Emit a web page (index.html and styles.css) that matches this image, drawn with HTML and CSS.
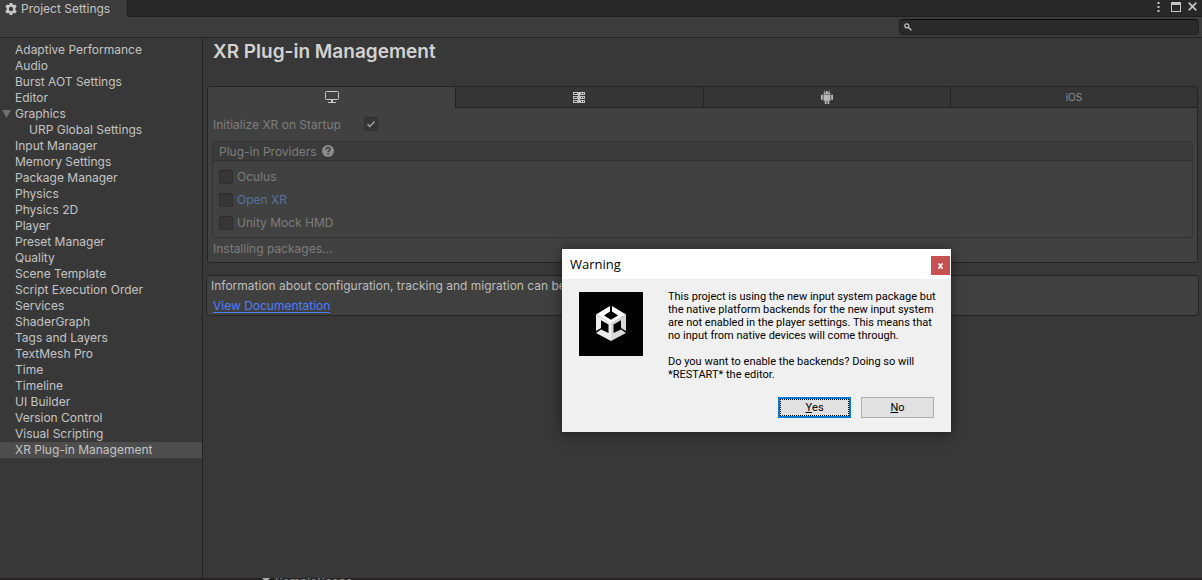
FILE: index.html
```html
<!DOCTYPE html>
<html lang="en">
<head>
<meta charset="utf-8">
<title>Project Settings</title>
<link rel="stylesheet" href="styles.css">
</head>
<body>
<div class="window">
  <header class="titlebar">
    <div class="window-tab">
      <svg class="gear" width="12" height="12" viewBox="0 0 12 12" aria-hidden="true">
        <path fill="#c8c8c8" fill-rule="evenodd" d="M4.600 0h2.800l.3 1.700.7.400 1.800-.6L11.700 3.800 10.400 5v2l1.300 1.200-1.500 2.300-1.800-.6-.7.400L7.400 12H4.600l-.3-1.700-.7-.4-1.800.6L.3 8.200 1.600 7V5L.3 3.800l1.500-2.300 1.800.6.700-.4zM6 3.800a2.200 2.200 0 1 0 0 4.400 2.200 2.200 0 0 0 0-4.400z"/>
      </svg>
      <span>Project Settings</span>
    </div>
    <div class="window-controls">
      <button class="win-btn" aria-label="Menu"><svg width="3" height="11" viewBox="0 0 3 11"><path fill="#c4c4c4" d="M.5 1h2v2h-2zM.5 5h2v2h-2zM.5 9h2v2h-2z"/></svg></button>
      <button class="win-btn" aria-label="Maximize"><svg width="10" height="10" viewBox="0 0 10 10"><path fill="#c4c4c4" fill-rule="evenodd" d="M0 0h10v10H0zM1 3v6h8V3z"/></svg></button>
      <button class="win-btn" aria-label="Close"><svg width="9" height="9" viewBox="0 0 9 9"><path d="M.7.7l7.600 7.600M8.300.7L.7 8.300" stroke="#c4c4c4" stroke-width="1.700"/></svg></button>
    </div>
  </header>

  <div class="toolbar">
    <div class="search">
      <svg width="8" height="8" viewBox="0 0 8 8" aria-hidden="true"><circle cx="2.800" cy="2.800" r="2" fill="none" stroke="#c4c4c4" stroke-width="1.200"/><path d="M4.300 4.300l3 3" stroke="#c4c4c4" stroke-width="1.400"/></svg>
      <input class="search-input" type="text" aria-label="Search settings">
    </div>
  </div>

  <div class="content">
    <nav class="sidebar" aria-label="Settings categories">
      <a href="#" class="item">Adaptive Performance</a>
      <a href="#" class="item">Audio</a>
      <a href="#" class="item">Burst AOT Settings</a>
      <a href="#" class="item">Editor</a>
      <a href="#" class="item parent"><svg class="arrow" width="9" height="8" viewBox="0 0 9 8" aria-hidden="true"><path d="M0 0h9L4.500 8z" fill="#6e6e6e"/></svg>Graphics</a>
      <a href="#" class="item child">URP Global Settings</a>
      <a href="#" class="item">Input Manager</a>
      <a href="#" class="item">Memory Settings</a>
      <a href="#" class="item">Package Manager</a>
      <a href="#" class="item">Physics</a>
      <a href="#" class="item">Physics 2D</a>
      <a href="#" class="item">Player</a>
      <a href="#" class="item">Preset Manager</a>
      <a href="#" class="item">Quality</a>
      <a href="#" class="item">Scene Template</a>
      <a href="#" class="item">Script Execution Order</a>
      <a href="#" class="item">Services</a>
      <a href="#" class="item">ShaderGraph</a>
      <a href="#" class="item">Tags and Layers</a>
      <a href="#" class="item">TextMesh Pro</a>
      <a href="#" class="item">Time</a>
      <a href="#" class="item">Timeline</a>
      <a href="#" class="item">UI Builder</a>
      <a href="#" class="item">Version Control</a>
      <a href="#" class="item">Visual Scripting</a>
      <a href="#" class="item selected" aria-current="page">XR Plug-in Management</a>
    </nav>

    <main class="main">
      <h1 class="heading">XR Plug-in Management</h1>

      <section class="panel">
        <div class="tabs" role="tablist">
          <button class="tab active" role="tab" aria-selected="true" aria-label="Desktop">
            <svg width="14" height="12" viewBox="0 0 14 12"><rect x=".5" y=".5" width="13" height="8" rx="1" fill="none" stroke="#c8c8c8"/><path d="M6 9h2v2h3v1H3v-1h3z" fill="#c8c8c8"/></svg>
          </button>
          <button class="tab" role="tab" aria-selected="false" aria-label="Dedicated server">
            <svg width="12" height="11" viewBox="0 0 12 11"><path fill="#c4c4c4" d="M0 0h12v3H0zM0 4h12v3H0zM0 8h12v3H0zM5 3h2v5H5z"/><path fill="#353535" d="M1 1h3v1H1zM8 1h1v1H8zM10 1h1v1h-1zM1 5h3v1H1zM8 5h1v1H8zM10 5h1v1h-1zM1 9h3v1H1zM8 9h1v1H8zM10 9h1v1h-1z"/></svg>
          </button>
          <button class="tab" role="tab" aria-selected="false" aria-label="Android">
            <svg width="12" height="14" viewBox="0 0 12 14"><path d="M3.200.3l1 1.500M8.800.3l-1 1.500" stroke="#aaa" stroke-width=".7"/><path fill="#b9b9b9" d="M2.500 4C2.600 2.200 4 1.200 6 1.200S9.400 2.200 9.500 4zM2.500 4.600h7v6.200h-7zM0 5.400q0-.9.900-.9t.9.900v3.500q0 .9-.9.900T0 8.900zM10.200 5.400q0-.9.900-.9t.9.900v3.500q0 .9-.9.900t-.9-.9zM3.800 10h1.700v4H3.800zM6.500 10h1.700v4H6.500z"/><path fill="#353535" d="M4 2.300h1v.9H4zM7 2.300h1v.9H7z"/></svg>
          </button>
          <button class="tab" role="tab" aria-selected="false">iOS</button>
        </div>

        <div class="panel-body">
          <div class="startup">
            <label class="startup-label" for="startup">Initialize XR on Startup</label>
            <input class="check" type="checkbox" id="startup" checked disabled>
          </div>

          <div class="providers">
            <div class="providers-head">
              <span>Plug-in Providers</span>
              <svg width="12" height="12" viewBox="0 0 12 12" aria-hidden="true"><circle cx="6" cy="6" r="6" fill="#8c8c8c"/><path d="M4 4.700C4 3.300 4.800 2.700 6 2.700s2 .7 2 1.700C8 5.600 6.100 5.600 6.100 7.200" fill="none" stroke="#3b3b3b" stroke-width="1.400"/><path fill="#3b3b3b" d="M5.300 8.200h1.500v1.500H5.300z"/></svg>
            </div>
            <div class="providers-list">
              <label class="provider"><input class="check" type="checkbox" disabled><span>Oculus</span></label>
              <label class="provider linked"><input class="check" type="checkbox" disabled><span>Open XR</span></label>
              <label class="provider"><input class="check" type="checkbox" disabled><span>Unity Mock HMD</span></label>
            </div>
          </div>

          <p class="status">Installing packages...</p>
        </div>
      </section>

      <section class="info">
        <p class="info-text">Information about configuration, tracking and migration can be found below.</p>
        <a class="doc-link" href="#">View Documentation</a>
      </section>
    </main>
  </div>

  <footer class="behind">
    <svg width="8" height="8" viewBox="0 0 8 8" aria-hidden="true"><path d="M0 0h8L4 4z" fill="#b0b0b0"/></svg>
    <span class="behind-name">SampleScene</span>
  </footer>
</div>

<div class="dialog" role="dialog" aria-labelledby="dialog-title">
  <div class="dialog-head">
    <h2 class="dialog-title" id="dialog-title">Warning</h2>
    <button class="dialog-close" aria-label="Close"><svg width="5" height="6" viewBox="0 0 5 6"><path d="M.5.3l4 5.400M4.500.3l-4 5.400" stroke="#fff" stroke-width="1.600"/></svg></button>
  </div>
  <div class="dialog-body">
    <svg class="logo" width="64" height="64" viewBox="0 0 64 64" aria-hidden="true">
      <path d="M0 0h64v64H0z"/>
      <path fill="#fff" d="M31 14v5.500L25 23.500l7 4.200 7-4.200-6-4V14l14 8.500L32 31.500 17 22.500z"/>
      <path fill="#ececec" d="M17 22.500l15 8.500v18L17 41l5-3.500 7.500 3.500V32.500L22 28.200V36l-5 3z"/>
      <path fill="#d8d8d8" d="M47 22.500L32 31v18l15-8-5-3.500-7.500 3.500V32.500l7.500-4.300V36l5 3z"/>
    </svg>
    <div class="message">
      <p>This project is using the new input system package but<br>the native platform backends for the new input system<br>are not enabled in the player settings. This means that<br>no input from native devices will come through.</p>
      <p>Do you want to enable the backends? Doing so will<br>*RESTART* the editor.</p>
    </div>
  </div>
  <div class="dialog-actions">
    <button class="dialog-btn default"><span class="face"><u>Y</u>es</span></button>
    <button class="dialog-btn"><span class="face"><u>N</u>o</span></button>
  </div>
</div>
</body>
</html>
```
FILE: styles.css
```css
* {
  box-sizing: border-box;
}

body {
  margin: 0;
  background: #383838;
  color: #c4c4c4;
  font: 12px/16px Inter, "Liberation Sans", sans-serif;
}

button {
  margin: 0;
  padding: 0;
  border: 0;
  background: none;
  color: inherit;
  font: inherit;
}

p, h1, h2 {
  margin: 0;
}

svg {
  display: block;
  flex: none;
}

.window {
  display: flex;
  flex-direction: column;
  height: 100vh;
  overflow: hidden;
}

.titlebar {
  display: flex;
  justify-content: space-between;
  flex: none;
  height: 17px;
  background: #282828;
  box-shadow: inset 0 -1px #1f1f1f;
}

.window-tab {
  display: flex;
  align-items: center;
  gap: 4px;
  padding: 0 17px 0 5px;
  background: #3c3c3c;
  border-right: 1px solid #202020;
}

.window-controls {
  display: flex;
  align-items: flex-start;
  gap: 7px;
  padding: 1px 5px 0 0;
}

.win-btn {
  display: flex;
  align-items: center;
  height: 11px;
}

.win-btn:first-child {
  margin-right: 4px;
}

.toolbar {
  display: flex;
  justify-content: flex-end;
  flex: none;
  height: 21px;
  padding: 2px 3px;
  background: #3c3c3c;
  border-bottom: 1px solid #232323;
}

.search {
  display: flex;
  align-items: center;
  gap: 5px;
  width: 300px;
  height: 16px;
  padding: 0 4px;
  background: #2a2a2a;
  border: 1px solid #212121;
  border-top-color: #0d0d0d;
  border-radius: 4px;
}

.search-input {
  flex: 1;
  min-width: 0;
  height: 14px;
  padding: 0;
  border: 0;
  outline: 0;
  background: none;
  color: #c4c4c4;
  font: inherit;
}

.content {
  display: flex;
  flex: 1;
  min-height: 0;
}

.sidebar {
  flex: none;
  width: 203px;
  padding-top: 4px;
  border-right: 1px solid #232323;
}

.item {
  display: block;
  padding-left: 15px;
  color: #c4c4c4;
  text-decoration: none;
}

.parent {
  display: flex;
  align-items: center;
  gap: 4px;
  padding-left: 2px;
}

.child {
  padding-left: 29px;
}

.selected {
  background: #4d4d4d;
}

.main {
  flex: 1;
  min-width: 0;
  padding: 0 3px;
}

.heading {
  padding: 2px 7px 0;
  color: #d2d2d2;
  font-size: 19px;
  font-weight: 600;
  line-height: 24px;
}

.panel {
  margin: 22px 1px 0;
  background: #414141;
  border: 1px solid #242424;
  border-radius: 3px;
  overflow: hidden;
}

.tabs {
  display: grid;
  grid-template-columns: repeat(4, 1fr);
}

.tab {
  display: flex;
  align-items: center;
  justify-content: center;
  height: 21px;
  background: #353535;
  border-bottom: 1px solid #242424;
  color: #8f8f8f;
  font-size: 10px;
}

.tab + .tab {
  border-left: 1px solid #242424;
}

.active {
  background: #414141;
  border-bottom-color: #414141;
}

.panel-body {
  padding: 9px 4px 5px;
  color: #7d7d7d;
}

.startup {
  display: flex;
  align-items: flex-start;
}

.startup-label {
  width: 152px;
  padding-left: 1px;
}

.check {
  appearance: none;
  flex: none;
  width: 14px;
  height: 14px;
  margin: 0;
  background: #363636;
  border: 1px solid #303030;
  border-top-color: #2a2a2a;
  border-radius: 2px;
}

.check:checked {
  background: #363636 url("data:image/svg+xml,%3Csvg xmlns='http://www.w3.org/2000/svg' viewBox='0 0 12 12'%3E%3Cpath d='M2.500 6.200l2.300 2.300L9.600 3.500' fill='none' stroke='%23a0a0a0' stroke-width='1.500'/%3E%3C/svg%3E") center / 12px 12px no-repeat;
}

.providers {
  margin-top: 8px;
  border: 1px solid #343434;
  border-radius: 3px;
}

.providers-head {
  display: flex;
  align-items: center;
  gap: 5px;
  height: 19px;
  padding: 1px 6px 0;
  background: #3b3b3b;
  border-bottom: 1px solid #323232;
}

.providers-head svg {
  margin-bottom: 1px;
}

.providers-list {
  display: flex;
  flex-direction: column;
  gap: 7px;
  padding: 8px 6px 6px;
}

.provider {
  display: flex;
  align-items: center;
  gap: 4px;
}

.linked {
  color: #56739e;
}

.status {
  padding: 3px 1px 0;
}

.info {
  margin-top: 12px;
  padding: 2px 4px;
  background: #404040;
  border: 1px solid #242424;
  border-radius: 3px;
}

.info-text {
  padding-bottom: 4px;
  color: #bdbdbd;
  white-space: nowrap;
}

.doc-link {
  display: block;
  width: max-content;
  height: 15px;
  margin-left: 2px;
  border-bottom: 1px solid #4c7eff;
  color: #4c7eff;
  text-decoration: none;
}

.behind {
  display: flex;
  flex: none;
  gap: 5px;
  height: 2px;
  padding-left: 262px;
  background: #262224;
  color: #8a8a8a;
  overflow: hidden;
}

.behind-name {
  line-height: 8px;
}

.dialog {
  position: absolute;
  top: 249px;
  left: 562px;
  width: 389px;
  padding-bottom: 14px;
  background: #f0f0f0;
  color: #000;
  font: 11px/13px Roboto, "Open Sans", sans-serif;
  box-shadow: 0 1px 12px rgba(0, 0, 0, 0.5);
}

.dialog-head {
  display: flex;
  justify-content: space-between;
  height: 30px;
  padding: 7px 1px 0 8px;
  background: #fff;
}

.dialog-title {
  font-family: "Open Sans", "Noto Sans", sans-serif;
  font-size: 13px;
  font-weight: 400;
  line-height: 16px;
}

.dialog-close {
  display: flex;
  align-items: center;
  justify-content: center;
  width: 19px;
  height: 19px;
  background: #c75050;
}

.dialog-body {
  display: flex;
  gap: 25px;
  padding: 13px 17px 0;
}

.message {
  display: flex;
  flex-direction: column;
  gap: 13px;
  margin-top: -2px;
  white-space: nowrap;
}

.dialog-actions {
  display: flex;
  justify-content: flex-end;
  gap: 10px;
  padding: 16px 17px 0;
}

.dialog-btn {
  width: 73px;
  height: 21px;
  background: #e1e1e1;
  border: 1px solid #adadad;
}

.face {
  display: flex;
  align-items: center;
  justify-content: center;
  height: 100%;
}

.default {
  border: 2px solid #0078d7;
}

.default .face {
  border: 1px dotted #000;
}
```
